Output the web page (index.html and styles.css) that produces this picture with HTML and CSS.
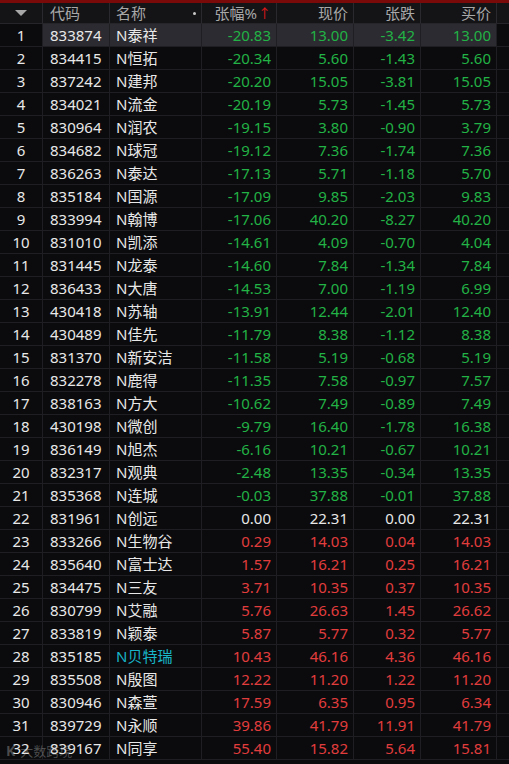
FILE: index.html
```html
<!DOCTYPE html>
<html lang="zh">
<head>
<meta charset="utf-8">
<title>行情列表</title>
<link rel="stylesheet" href="styles.css">
</head>
<body>
<div class="board">
  <div class="topbar"></div>
  <div class="row head">
    <div class="c idx"><span class="tri"></span></div>
    <div class="c code">代码</div>
    <div class="c name">名称<span class="dot"></span></div>
    <div class="c num">张幅%<span class="arrow">↑</span></div>
    <div class="c num">现价</div>
    <div class="c num">张跌</div>
    <div class="c num">买价</div>
    <div class="c pad"></div>
  </div>
  <div class="row sel"><div class="c idx">1</div><div class="c code">833874</div><div class="c name">N泰祥</div><div class="c num g">-20.83</div><div class="c num g">13.00</div><div class="c num g">-3.42</div><div class="c num g">13.00</div><div class="c pad"></div></div>
  <div class="row"><div class="c idx">2</div><div class="c code">834415</div><div class="c name">N恒拓</div><div class="c num g">-20.34</div><div class="c num g">5.60</div><div class="c num g">-1.43</div><div class="c num g">5.60</div><div class="c pad"></div></div>
  <div class="row"><div class="c idx">3</div><div class="c code">837242</div><div class="c name">N建邦</div><div class="c num g">-20.20</div><div class="c num g">15.05</div><div class="c num g">-3.81</div><div class="c num g">15.05</div><div class="c pad"></div></div>
  <div class="row"><div class="c idx">4</div><div class="c code">834021</div><div class="c name">N流金</div><div class="c num g">-20.19</div><div class="c num g">5.73</div><div class="c num g">-1.45</div><div class="c num g">5.73</div><div class="c pad"></div></div>
  <div class="row"><div class="c idx">5</div><div class="c code">830964</div><div class="c name">N润农</div><div class="c num g">-19.15</div><div class="c num g">3.80</div><div class="c num g">-0.90</div><div class="c num g">3.79</div><div class="c pad"></div></div>
  <div class="row"><div class="c idx">6</div><div class="c code">834682</div><div class="c name">N球冠</div><div class="c num g">-19.12</div><div class="c num g">7.36</div><div class="c num g">-1.74</div><div class="c num g">7.36</div><div class="c pad"></div></div>
  <div class="row"><div class="c idx">7</div><div class="c code">836263</div><div class="c name">N泰达</div><div class="c num g">-17.13</div><div class="c num g">5.71</div><div class="c num g">-1.18</div><div class="c num g">5.70</div><div class="c pad"></div></div>
  <div class="row"><div class="c idx">8</div><div class="c code">835184</div><div class="c name">N国源</div><div class="c num g">-17.09</div><div class="c num g">9.85</div><div class="c num g">-2.03</div><div class="c num g">9.83</div><div class="c pad"></div></div>
  <div class="row"><div class="c idx">9</div><div class="c code">833994</div><div class="c name">N翰博</div><div class="c num g">-17.06</div><div class="c num g">40.20</div><div class="c num g">-8.27</div><div class="c num g">40.20</div><div class="c pad"></div></div>
  <div class="row"><div class="c idx">10</div><div class="c code">831010</div><div class="c name">N凯添</div><div class="c num g">-14.61</div><div class="c num g">4.09</div><div class="c num g">-0.70</div><div class="c num g">4.04</div><div class="c pad"></div></div>
  <div class="row"><div class="c idx">11</div><div class="c code">831445</div><div class="c name">N龙泰</div><div class="c num g">-14.60</div><div class="c num g">7.84</div><div class="c num g">-1.34</div><div class="c num g">7.84</div><div class="c pad"></div></div>
  <div class="row"><div class="c idx">12</div><div class="c code">836433</div><div class="c name">N大唐</div><div class="c num g">-14.53</div><div class="c num g">7.00</div><div class="c num g">-1.19</div><div class="c num g">6.99</div><div class="c pad"></div></div>
  <div class="row"><div class="c idx">13</div><div class="c code">430418</div><div class="c name">N苏轴</div><div class="c num g">-13.91</div><div class="c num g">12.44</div><div class="c num g">-2.01</div><div class="c num g">12.40</div><div class="c pad"></div></div>
  <div class="row"><div class="c idx">14</div><div class="c code">430489</div><div class="c name">N佳先</div><div class="c num g">-11.79</div><div class="c num g">8.38</div><div class="c num g">-1.12</div><div class="c num g">8.38</div><div class="c pad"></div></div>
  <div class="row"><div class="c idx">15</div><div class="c code">831370</div><div class="c name">N新安洁</div><div class="c num g">-11.58</div><div class="c num g">5.19</div><div class="c num g">-0.68</div><div class="c num g">5.19</div><div class="c pad"></div></div>
  <div class="row"><div class="c idx">16</div><div class="c code">832278</div><div class="c name">N鹿得</div><div class="c num g">-11.35</div><div class="c num g">7.58</div><div class="c num g">-0.97</div><div class="c num g">7.57</div><div class="c pad"></div></div>
  <div class="row"><div class="c idx">17</div><div class="c code">838163</div><div class="c name">N方大</div><div class="c num g">-10.62</div><div class="c num g">7.49</div><div class="c num g">-0.89</div><div class="c num g">7.49</div><div class="c pad"></div></div>
  <div class="row"><div class="c idx">18</div><div class="c code">430198</div><div class="c name">N微创</div><div class="c num g">-9.79</div><div class="c num g">16.40</div><div class="c num g">-1.78</div><div class="c num g">16.38</div><div class="c pad"></div></div>
  <div class="row"><div class="c idx">19</div><div class="c code">836149</div><div class="c name">N旭杰</div><div class="c num g">-6.16</div><div class="c num g">10.21</div><div class="c num g">-0.67</div><div class="c num g">10.21</div><div class="c pad"></div></div>
  <div class="row"><div class="c idx">20</div><div class="c code">832317</div><div class="c name">N观典</div><div class="c num g">-2.48</div><div class="c num g">13.35</div><div class="c num g">-0.34</div><div class="c num g">13.35</div><div class="c pad"></div></div>
  <div class="row"><div class="c idx">21</div><div class="c code">835368</div><div class="c name">N连城</div><div class="c num g">-0.03</div><div class="c num g">37.88</div><div class="c num g">-0.01</div><div class="c num g">37.88</div><div class="c pad"></div></div>
  <div class="row"><div class="c idx">22</div><div class="c code">831961</div><div class="c name">N创远</div><div class="c num w">0.00</div><div class="c num w">22.31</div><div class="c num w">0.00</div><div class="c num w">22.31</div><div class="c pad"></div></div>
  <div class="row"><div class="c idx">23</div><div class="c code">833266</div><div class="c name">N生物谷</div><div class="c num r">0.29</div><div class="c num r">14.03</div><div class="c num r">0.04</div><div class="c num r">14.03</div><div class="c pad"></div></div>
  <div class="row"><div class="c idx">24</div><div class="c code">835640</div><div class="c name">N富士达</div><div class="c num r">1.57</div><div class="c num r">16.21</div><div class="c num r">0.25</div><div class="c num r">16.21</div><div class="c pad"></div></div>
  <div class="row"><div class="c idx">25</div><div class="c code">834475</div><div class="c name">N三友</div><div class="c num r">3.71</div><div class="c num r">10.35</div><div class="c num r">0.37</div><div class="c num r">10.35</div><div class="c pad"></div></div>
  <div class="row"><div class="c idx">26</div><div class="c code">830799</div><div class="c name">N艾融</div><div class="c num r">5.76</div><div class="c num r">26.63</div><div class="c num r">1.45</div><div class="c num r">26.62</div><div class="c pad"></div></div>
  <div class="row"><div class="c idx">27</div><div class="c code">833819</div><div class="c name">N颖泰</div><div class="c num r">5.87</div><div class="c num r">5.77</div><div class="c num r">0.32</div><div class="c num r">5.77</div><div class="c pad"></div></div>
  <div class="row"><div class="c idx">28</div><div class="c code">835185</div><div class="c name cy">N贝特瑞</div><div class="c num r">10.43</div><div class="c num r">46.16</div><div class="c num r">4.36</div><div class="c num r">46.16</div><div class="c pad"></div></div>
  <div class="row"><div class="c idx">29</div><div class="c code">835508</div><div class="c name">N殷图</div><div class="c num r">12.22</div><div class="c num r">11.20</div><div class="c num r">1.22</div><div class="c num r">11.20</div><div class="c pad"></div></div>
  <div class="row"><div class="c idx">30</div><div class="c code">830946</div><div class="c name">N森萱</div><div class="c num r">17.59</div><div class="c num r">6.35</div><div class="c num r">0.95</div><div class="c num r">6.34</div><div class="c pad"></div></div>
  <div class="row"><div class="c idx">31</div><div class="c code">839729</div><div class="c name">N永顺</div><div class="c num r">39.86</div><div class="c num r">41.79</div><div class="c num r">11.91</div><div class="c num r">41.79</div><div class="c pad"></div></div>
  <div class="row"><div class="c idx">32</div><div class="c code">839167</div><div class="c name">N同享</div><div class="c num r">55.40</div><div class="c num r">15.82</div><div class="c num r">5.64</div><div class="c num r">15.81</div><div class="c pad"></div></div>
  <div class="watermark"><span class="wm-logo">K</span>大数跨境</div>
</div>
</body>
</html>
```

FILE: styles.css
```css
html, body {
  margin: 0;
  padding: 0;
  background: #0b0b0d;
}
body {
  font-family: "Noto Sans", "Noto Sans CJK SC", sans-serif;
  font-size: 15px;
  color: #e8e8e8;
}
.board {
  position: relative;
  width: 509px;
  height: 764px;
  overflow: hidden;
  background: #0b0b0d;
}
.topbar {
  height: 3px;
  background: #7a0a0a;
}
.row {
  display: grid;
  grid-template-columns: 43px 67px 92px 75px 77px 67px 76px 12px;
  height: 23px;
  box-sizing: border-box;
  border-bottom: 1px solid #1f1f23;
}
.row.head {
  height: 21px;
  background: #141417;
  color: #a8a8a8;
  border-bottom: 1px solid #26262a;
}
.c {
  display: flex;
  align-items: center;
  border-right: 1px solid #1f1f23;
  white-space: nowrap;
  overflow: hidden;
  line-height: 1;
}
.head .c {
  border-right-color: #2a2a2e;
}
.c.pad {
  border-right: none;
}
.idx {
  justify-content: center;
}
.code {
  padding-left: 7px;
}
.name {
  padding-left: 6px;
  position: relative;
}
.num {
  justify-content: flex-end;
  padding-right: 5px;
}
.row.sel .c:not(.idx):not(.pad) {
  background: #2b2b31;
}
.g { color: #22b245; }
.r { color: #e23d3d; }
.w { color: #e8e8e8; }
.cy { color: #18b6c8; }
.tri {
  width: 0;
  height: 0;
  border-left: 6px solid transparent;
  border-right: 6px solid transparent;
  border-top: 6px solid #a8a8a8;
}
.dot {
  position: absolute;
  right: 5px;
  top: 9px;
  width: 3px;
  height: 3px;
  border-radius: 50%;
  background: #c8c8c8;
}
.arrow {
  color: #e01818;
  font-size: 13px;
  margin-left: 1px;
}
.watermark {
  position: absolute;
  left: 6px;
  bottom: 4px;
  font-size: 13px;
  color: rgba(200, 200, 200, 0.35);
  display: flex;
  align-items: center;
  gap: 2px;
  pointer-events: none;
}
.wm-logo {
  font-weight: bold;
  font-size: 14px;
  margin-right: 3px;
}
```
